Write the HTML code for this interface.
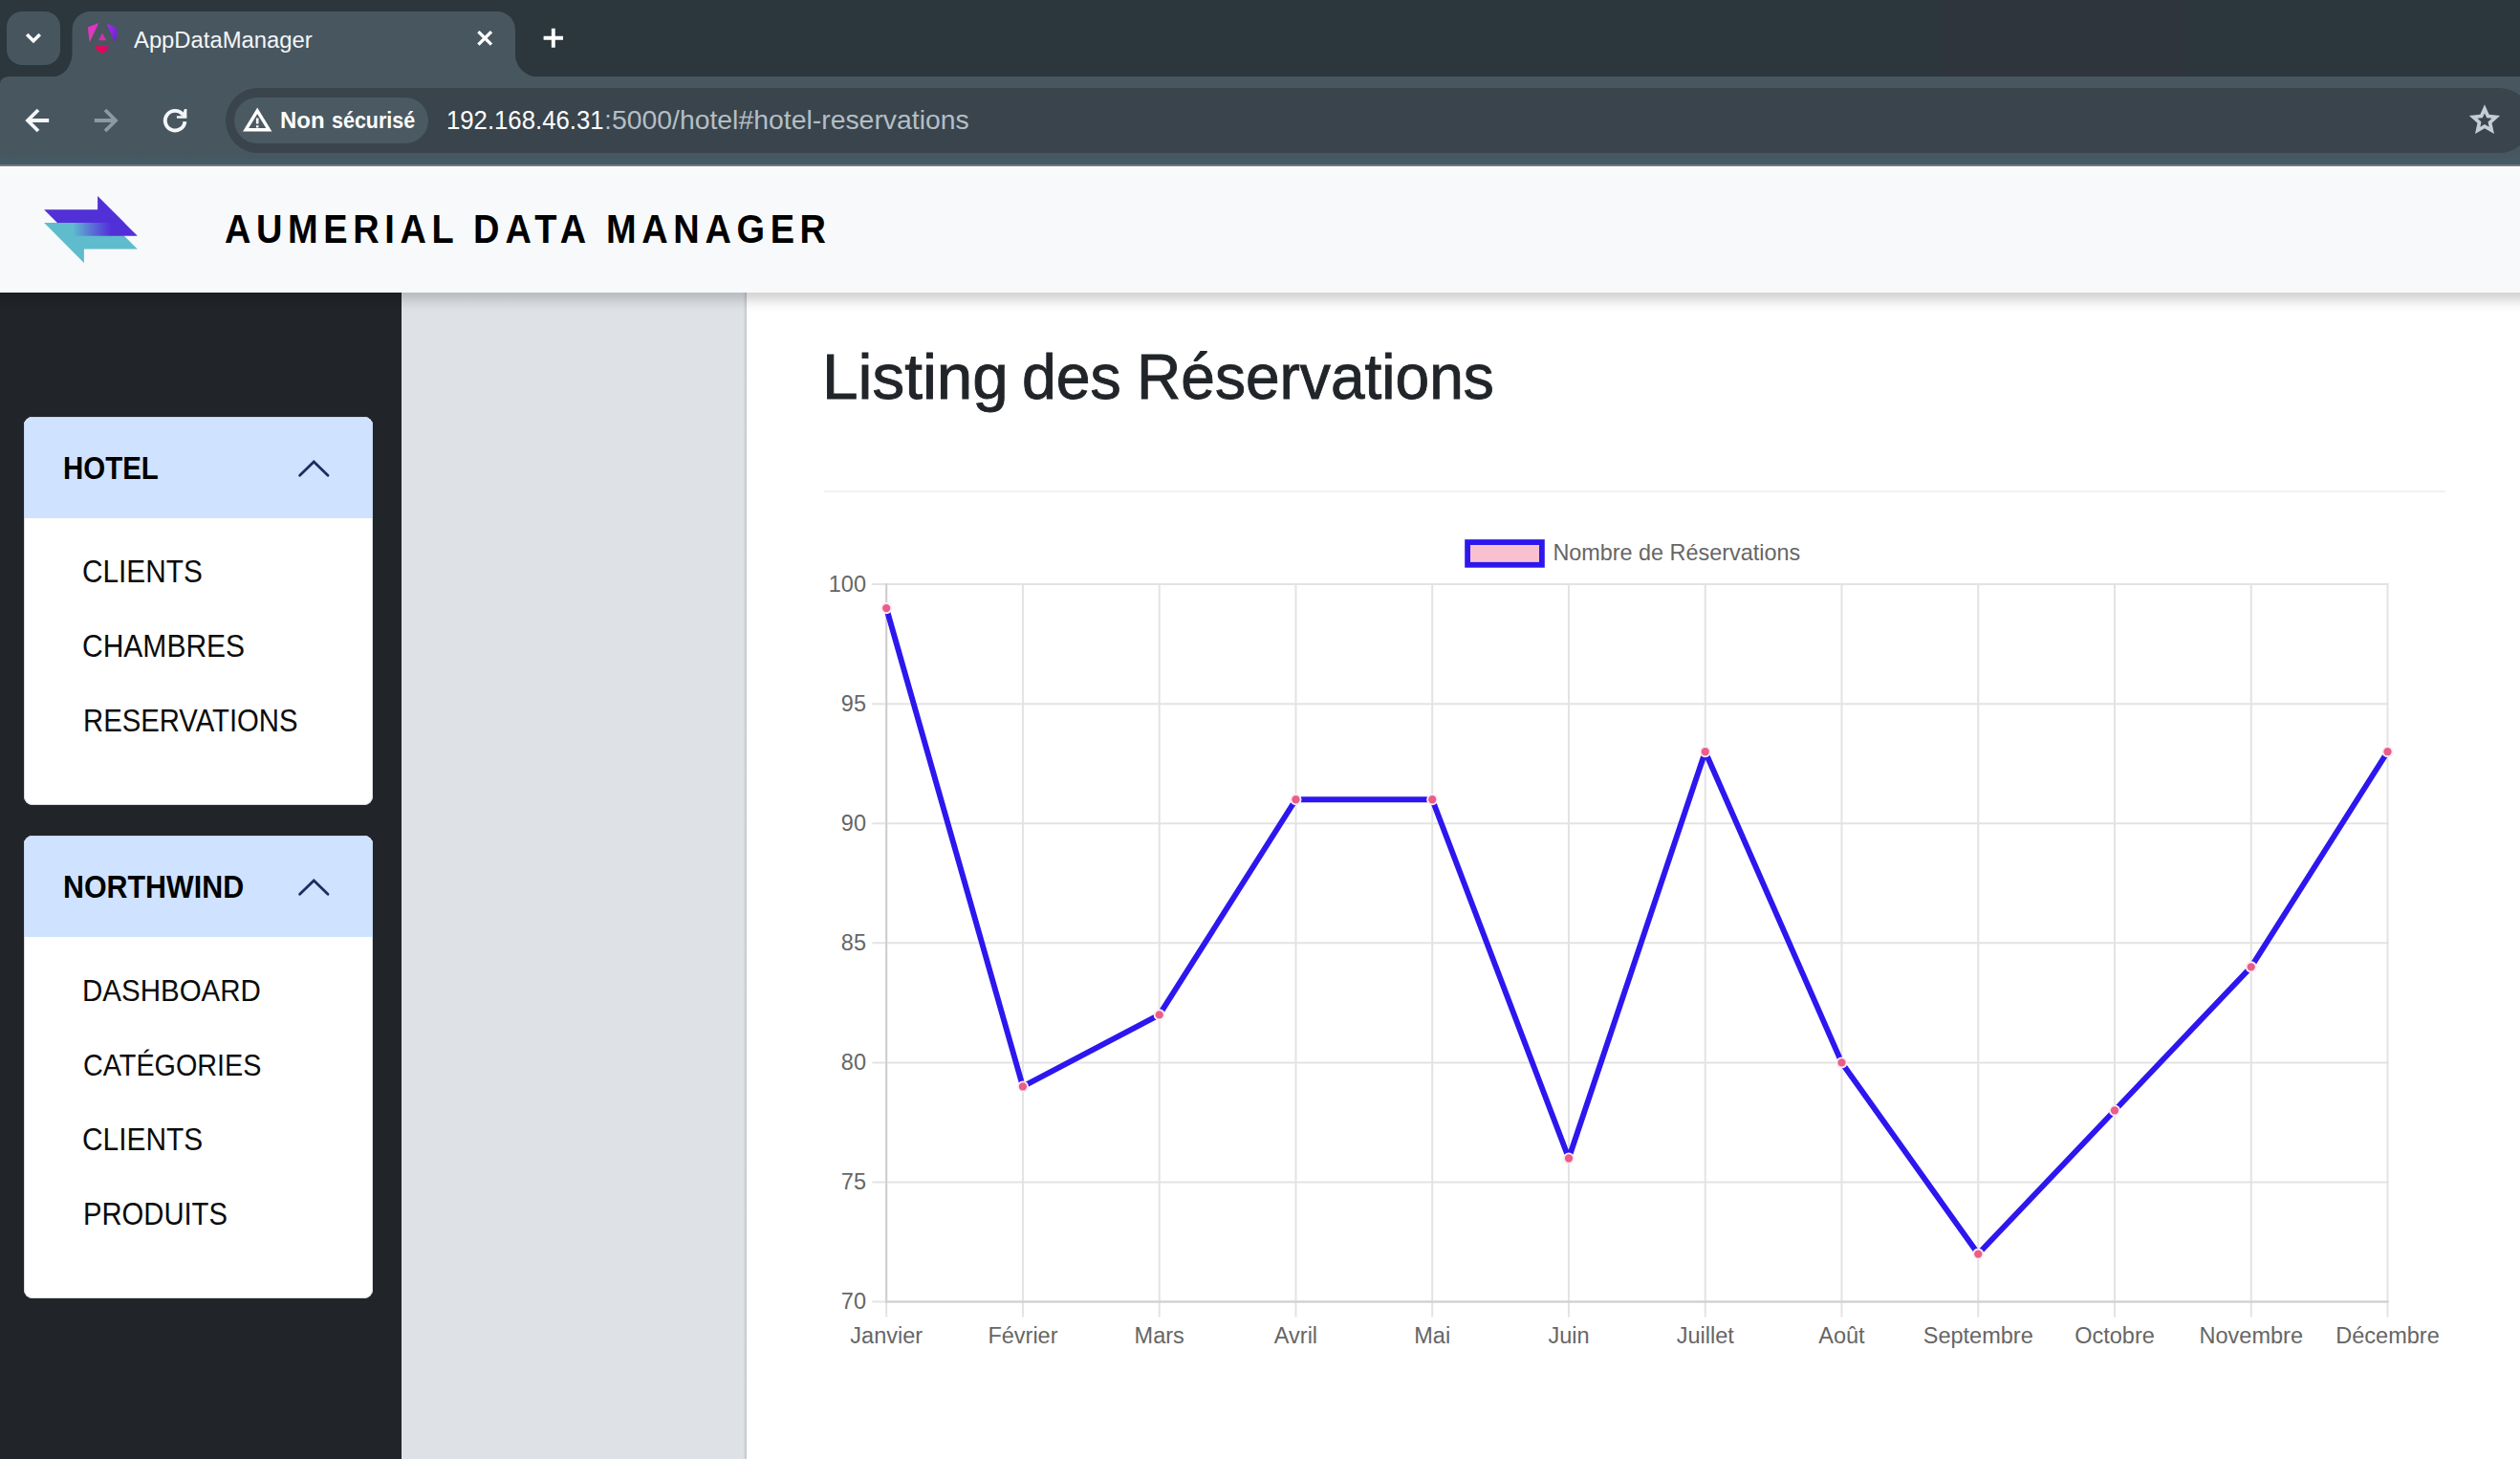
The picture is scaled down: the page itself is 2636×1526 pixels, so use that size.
<!DOCTYPE html>
<html lang="fr"><head><meta charset="utf-8"><title>AppDataManager</title>
<style>
html,body{margin:0;padding:0;overflow:hidden}
body{width:2636px;height:1526px;position:relative;overflow:hidden;background:#fff;font-family:"Liberation Sans",sans-serif}
.a{position:absolute}
.t{position:absolute;white-space:pre;line-height:1;transform-origin:0 0;font-family:"Liberation Sans",sans-serif}
svg{position:absolute;overflow:visible}
</style></head><body>
<div class="a" style="left:0;top:0;width:2636px;height:1526px;overflow:hidden">

<div class="a" style="left:0;top:0;width:2636px;height:100px;background:#2b373c"></div>
<div class="a" style="left:0;top:80px;width:2636px;height:93px;background:linear-gradient(to bottom,#48565f 0,#48565f 82px,#445a67 90px,#47585f 92px);border-top-left-radius:10px 7px"></div>
<div class="a" style="left:0;top:172px;width:2636px;height:1.8px;background:#737d80"></div>
<div class="a" style="left:0;top:173.8px;width:2636px;height:3px;background:#fff"></div>
<div class="a" style="left:2031px;top:0;width:255px;height:80px;background:#2e353d"></div>
<div class="a" style="left:7px;top:12px;width:56px;height:56px;border-radius:16px;background:#47555e"></div>
<svg style="left:7px;top:12px" width="56" height="56" viewBox="0 0 56 56"><path d="M21.15 23.9 L27.95 30.7 L34.75 23.9" fill="none" stroke="#fff" stroke-width="3.5"/></svg>
<svg style="left:0;top:0" width="700" height="82" viewBox="0 0 700 82"><path d="M54.5 80.5 A21 25 0 0 0 75.5 55.5 L75.5 31 A19 19 0 0 1 94.5 12 L520 12 A19 19 0 0 1 539 31 L539 57 A24 23.5 0 0 0 563 80.5 Z" fill="#48565f"/></svg>
<svg style="left:84px;top:16px" width="48" height="48" viewBox="84 16 48 48">
<defs><linearGradient id="fl" x1="0" y1="0" x2="0" y2="1"><stop offset="0" stop-color="#e22fd8"/><stop offset="1" stop-color="#e0409c"/></linearGradient>
<linearGradient id="fr" x1="0" y1="0" x2="1" y2="1"><stop offset="0" stop-color="#ac2cf0"/><stop offset="1" stop-color="#6422d0"/></linearGradient>
<linearGradient id="fb" x1="0" y1="0" x2="1" y2="0"><stop offset="0" stop-color="#e8045a"/><stop offset=".6" stop-color="#e4045c"/><stop offset="1" stop-color="#b41680"/></linearGradient></defs>
<path d="M91.9 28.6 L103.3 24 L93.6 44.4 Z" fill="url(#fl)"/>
<path d="M111.4 24.6 L121.9 29.2 L122.2 39 L120.2 44.4 Z" fill="url(#fr)"/>
<path d="M107 34.2 L111.2 42.2 L102.9 42.2 Z" fill="#cc34a8"/>
<path d="M99.8 48.3 L113.9 48.3 L113 52.3 L107 55.9 L101 52.3 Z" fill="url(#fb)"/>
</svg>
<span class="t" style="left:139.5px;top:30.48px;font-size:23.91px;font-weight:400;color:#f3f6f9;transform:scaleX(0.9957);">AppDataManager</span>
<svg style="left:0;top:0" width="700" height="80"><path d="M500.4 33.1 L514 46.7 M514 33.1 L500.4 46.7" stroke="#fff" stroke-width="3.3" fill="none"/><path d="M568.6 39.8 L589 39.8 M578.8 29.8 L578.8 49.8" stroke="#fff" stroke-width="3.9" fill="none"/></svg>
<svg style="left:0;top:80px" width="240" height="92" viewBox="0 80 240 92">
<path d="M51.2 126 L30.4 126 M40 115 L29 126 L40 137" stroke="#f4f7fa" stroke-width="3.8" fill="none" stroke-linejoin="miter"/>
<path d="M98.8 126 L119.6 126 M110 115 L121 126 L110 137" stroke="#8c9aa3" stroke-width="3.8" fill="none"/>
<path d="M191.4 120.1 A10.3 10.3 0 1 0 193.36 127.1" stroke="#f4f7fa" stroke-width="3.9" fill="none"/>
<path d="M195.4 113.9 L195.4 123.8 L184.9 123.8 L184.9 121.3 L190.6 121.3 L192.9 113.9 Z" fill="#f4f7fa"/>
</svg>
<div class="a" style="left:236px;top:92px;width:2412px;height:68px;border-radius:34px;background:#39444c"></div>
<div class="a" style="left:245px;top:101.6px;width:203.3px;height:48.2px;border-radius:24.1px;background:#4a5962"></div>
<svg style="left:250px;top:108px" width="40" height="36" viewBox="250 108 40 36">
<path d="M269.2 115.8 L281.4 135.8 L257 135.8 Z" fill="none" stroke="#fff" stroke-width="3.4" stroke-linejoin="miter"/>
<path d="M269.2 123.4 L269.2 129.4 M269.2 131.2 L269.2 133.6" stroke="#fff" stroke-width="2.6" fill="none"/></svg>
<span class="t" style="left:292.67px;top:114.72px;font-size:23.62px;font-weight:700;color:#fff;transform:scaleX(1.014);">Non</span>
<span class="t" style="left:346.59px;top:114.72px;font-size:23.62px;font-weight:700;color:#fff;transform:scaleX(0.9096);">sécurisé</span>
<span class="t" style="left:466.79px;top:113.38px;font-size:26.96px;font-weight:400;color:#fff;transform:scaleX(0.9544);">192.168.46.31</span>
<span class="t" style="left:632.39px;top:113.38px;font-size:26.96px;font-weight:400;color:#b4bec5;transform:scaleX(1.0528);">:5000/hotel#hotel-reservations</span>
<svg style="left:2570px;top:100px" width="60" height="50" viewBox="2570 100 60 50"><path d="M2599.00 109.30 L2603.67 119.87 L2615.17 121.05 L2606.56 128.76 L2608.99 140.05 L2599.00 134.25 L2589.01 140.05 L2591.44 128.76 L2582.83 121.05 L2594.33 119.87 Z M2599.00 118.40 L2601.17 123.31 L2606.51 123.86 L2602.52 127.44 L2603.64 132.69 L2599.00 130.00 L2594.36 132.69 L2595.48 127.44 L2591.49 123.86 L2596.83 123.31 Z" fill="#c4cdd5" fill-rule="evenodd"/></svg>
<div class="a" style="left:0;top:306px;width:420px;height:1220px;background:#212529"></div>
<div class="a" style="left:420px;top:306px;width:361px;height:1220px;background:linear-gradient(to right,#dee2e6 0,#dee2e6 357px,#d2d5d8 359px,#c3c6c9 361px)"></div>
<div class="a" style="left:0;top:176px;width:2636px;height:130px;background:#f8f9fa"></div>
<div class="a" style="left:0;top:306px;width:2636px;height:22px;background:linear-gradient(to bottom,rgba(0,0,0,.165) 0,rgba(0,0,0,.14) 4px,rgba(0,0,0,.08) 9px,rgba(0,0,0,.03) 14px,rgba(0,0,0,.008) 18px,rgba(0,0,0,0) 22px)"></div>
<svg style="left:30px;top:190px" width="140" height="100" viewBox="30 190 140 100">
<defs><linearGradient id="lg" gradientUnits="userSpaceOnUse" x1="76" y1="0" x2="116" y2="0"><stop offset="0" stop-color="#5fbccd"/><stop offset=".45" stop-color="#5a78d6"/><stop offset="1" stop-color="#5230d8"/></linearGradient></defs>
<path d="M46.1 233 L116.2 233 L143.8 260.6 L87.9 260.6 L87.9 275 Z" fill="#5fbccd"/>
<path d="M46.1 219.3 L102.1 219.3 L102.1 204.9 L130.7 233.6 L60.4 233.6 Z" fill="#5230d8"/>
<path d="M59.8 233 L130 233 L143.8 246.8 L73.6 246.8 Z" fill="url(#lg)"/>
</svg>
<span class="t" style="left:234.8px;top:219.16px;font-size:42.17px;font-weight:700;color:#000;letter-spacing:6.254px;transform:scaleX(0.9);">AUMERIAL</span>
<span class="t" style="left:495.3px;top:219.16px;font-size:42.17px;font-weight:700;color:#000;letter-spacing:6.778px;transform:scaleX(0.9);">DATA</span>
<span class="t" style="left:634.2px;top:219.16px;font-size:42.17px;font-weight:700;color:#000;letter-spacing:6.296px;transform:scaleX(0.9);">MANAGER</span>
<div class="a" style="left:25px;top:436px;width:365px;height:406px;border-radius:9px;background:#fff;overflow:hidden;box-shadow:inset 0 0 0 1px #d9dcdf"><div class="a" style="left:0;top:0;width:365px;height:106px;background:#cfe2ff;box-shadow:inset 0 1px 0 #c3d4ee,inset 1px 0 0 #c3d4ee,inset -1px 0 0 #c3d4ee"></div></div>
<div class="a" style="left:25px;top:874px;width:365px;height:484px;border-radius:9px;background:#fff;overflow:hidden;box-shadow:inset 0 0 0 1px #d9dcdf"><div class="a" style="left:0;top:0;width:365px;height:106px;background:#cfe2ff;box-shadow:inset 0 1px 0 #c3d4ee,inset 1px 0 0 #c3d4ee,inset -1px 0 0 #c3d4ee"></div></div>
<svg style="left:300px;top:470.2px" width="56" height="40" viewBox="300 470.2 56 40"><path d="M313.6 497.5 L328.3 483.2 L343 497.5" fill="none" stroke="#1b2e63" stroke-width="2.8" stroke-linecap="round" stroke-linejoin="miter"/></svg>
<svg style="left:300px;top:908.2px" width="56" height="40" viewBox="300 908.2 56 40"><path d="M313.6 935.5 L328.3 921.2 L343 935.5" fill="none" stroke="#1b2e63" stroke-width="2.8" stroke-linecap="round" stroke-linejoin="miter"/></svg>
<span class="t" style="left:66.2px;top:474.06px;font-size:32.75px;font-weight:700;color:#000;transform:scaleX(0.8991);">HOTEL</span>
<span class="t" style="left:66.34px;top:912.16px;font-size:32.75px;font-weight:700;color:#000;transform:scaleX(0.928);">NORTHWIND</span>
<span class="t" style="left:86.46px;top:582.21px;font-size:32.46px;font-weight:400;color:#0b0b0b;transform:scaleX(0.9179);">CLIENTS</span>
<span class="t" style="left:86.45px;top:660.11px;font-size:32.46px;font-weight:400;color:#0b0b0b;transform:scaleX(0.9249);">CHAMBRES</span>
<span class="t" style="left:86.59px;top:738.01px;font-size:32.46px;font-weight:400;color:#0b0b0b;transform:scaleX(0.902);">RESERVATIONS</span>
<span class="t" style="left:86.05px;top:1020.46px;font-size:32.17px;font-weight:400;color:#0b0b0b;transform:scaleX(0.9176);">DASHBOARD</span>
<span class="t" style="left:87.01px;top:1098.26px;font-size:32.17px;font-weight:400;color:#0b0b0b;transform:scaleX(0.8946);">CATÉGORIES</span>
<span class="t" style="left:86.45px;top:1176.23px;font-size:32.32px;font-weight:400;color:#0b0b0b;transform:scaleX(0.9248);">CLIENTS</span>
<span class="t" style="left:86.6px;top:1254.21px;font-size:32.46px;font-weight:400;color:#0b0b0b;transform:scaleX(0.9);">PRODUITS</span>
<span class="t" style="left:859.89px;top:361.85px;font-size:65.94px;font-weight:400;color:#212529;transform:scaleX(1.0221);-webkit-text-stroke:0.9px #212529;">Listing</span>
<span class="t" style="left:1069.17px;top:361.85px;font-size:65.94px;font-weight:400;color:#212529;transform:scaleX(0.9762);-webkit-text-stroke:0.9px #212529;">des</span>
<span class="t" style="left:1188.94px;top:361.85px;font-size:65.94px;font-weight:400;color:#212529;transform:scaleX(0.9714);-webkit-text-stroke:0.9px #212529;">Réservations</span>
<div class="a" style="left:862px;top:513px;width:1696px;height:2px;background:#f1f1f2"></div>
<svg style="left:0;top:0" width="2636" height="1526" viewBox="0 0 2636 1526" font-family="Liberation Sans, sans-serif" font-size="23.5" fill="#666">
<path d="M927.20 610.1 L927.20 1377.5" stroke="#e3e3e3" stroke-width="2" fill="none"/>
<path d="M1069.95 610.1 L1069.95 1377.5" stroke="#e3e3e3" stroke-width="2" fill="none"/>
<path d="M1212.71 610.1 L1212.71 1377.5" stroke="#e3e3e3" stroke-width="2" fill="none"/>
<path d="M1355.46 610.1 L1355.46 1377.5" stroke="#e3e3e3" stroke-width="2" fill="none"/>
<path d="M1498.22 610.1 L1498.22 1377.5" stroke="#e3e3e3" stroke-width="2" fill="none"/>
<path d="M1640.97 610.1 L1640.97 1377.5" stroke="#e3e3e3" stroke-width="2" fill="none"/>
<path d="M1783.73 610.1 L1783.73 1377.5" stroke="#e3e3e3" stroke-width="2" fill="none"/>
<path d="M1926.48 610.1 L1926.48 1377.5" stroke="#e3e3e3" stroke-width="2" fill="none"/>
<path d="M2069.24 610.1 L2069.24 1377.5" stroke="#e3e3e3" stroke-width="2" fill="none"/>
<path d="M2211.99 610.1 L2211.99 1377.5" stroke="#e3e3e3" stroke-width="2" fill="none"/>
<path d="M2354.75 610.1 L2354.75 1377.5" stroke="#e3e3e3" stroke-width="2" fill="none"/>
<path d="M2497.50 610.1 L2497.50 1377.5" stroke="#e3e3e3" stroke-width="2" fill="none"/>
<path d="M912.4 1361.60 L2498.5 1361.60" stroke="#e3e3e3" stroke-width="2" fill="none"/>
<path d="M912.4 1236.52 L2498.5 1236.52" stroke="#e3e3e3" stroke-width="2" fill="none"/>
<path d="M912.4 1111.43 L2498.5 1111.43" stroke="#e3e3e3" stroke-width="2" fill="none"/>
<path d="M912.4 986.35 L2498.5 986.35" stroke="#e3e3e3" stroke-width="2" fill="none"/>
<path d="M912.4 861.27 L2498.5 861.27" stroke="#e3e3e3" stroke-width="2" fill="none"/>
<path d="M912.4 736.18 L2498.5 736.18" stroke="#e3e3e3" stroke-width="2" fill="none"/>
<path d="M912.4 611.10 L2498.5 611.10" stroke="#e3e3e3" stroke-width="2" fill="none"/>
<path d="M927.20 610.1 L927.20 1362.6" stroke="#cfcfcf" stroke-width="2" fill="none"/>
<path d="M926.20 1361.6 L2498.5 1361.6" stroke="#cfcfcf" stroke-width="2" fill="none"/>
<path d="M927.20 636.12 L1069.95 1136.45 L1212.71 1061.40 L1355.46 836.25 L1498.22 836.25 L1640.97 1211.50 L1783.73 786.22 L1926.48 1111.43 L2069.24 1311.57 L2211.99 1161.47 L2354.75 1011.37 L2497.50 786.22" stroke="#2d17ee" stroke-width="5.9" fill="none" stroke-linejoin="round"/>
<circle cx="927.20" cy="636.12" r="5.1" fill="#ea5d89" stroke="#fcecf1" stroke-width="1.9"/>
<circle cx="1069.95" cy="1136.45" r="5.1" fill="#ea5d89" stroke="#fcecf1" stroke-width="1.9"/>
<circle cx="1212.71" cy="1061.40" r="5.1" fill="#ea5d89" stroke="#fcecf1" stroke-width="1.9"/>
<circle cx="1355.46" cy="836.25" r="5.1" fill="#ea5d89" stroke="#fcecf1" stroke-width="1.9"/>
<circle cx="1498.22" cy="836.25" r="5.1" fill="#ea5d89" stroke="#fcecf1" stroke-width="1.9"/>
<circle cx="1640.97" cy="1211.50" r="5.1" fill="#ea5d89" stroke="#fcecf1" stroke-width="1.9"/>
<circle cx="1783.73" cy="786.22" r="5.1" fill="#ea5d89" stroke="#fcecf1" stroke-width="1.9"/>
<circle cx="1926.48" cy="1111.43" r="5.1" fill="#ea5d89" stroke="#fcecf1" stroke-width="1.9"/>
<circle cx="2069.24" cy="1311.57" r="5.1" fill="#ea5d89" stroke="#fcecf1" stroke-width="1.9"/>
<circle cx="2211.99" cy="1161.47" r="5.1" fill="#ea5d89" stroke="#fcecf1" stroke-width="1.9"/>
<circle cx="2354.75" cy="1011.37" r="5.1" fill="#ea5d89" stroke="#fcecf1" stroke-width="1.9"/>
<circle cx="2497.50" cy="786.22" r="5.1" fill="#ea5d89" stroke="#fcecf1" stroke-width="1.9"/>
<text x="906.0" y="1369.40" text-anchor="end">70</text>
<text x="906.0" y="1244.32" text-anchor="end">75</text>
<text x="906.0" y="1119.23" text-anchor="end">80</text>
<text x="906.0" y="994.15" text-anchor="end">85</text>
<text x="906.0" y="869.07" text-anchor="end">90</text>
<text x="906.0" y="743.98" text-anchor="end">95</text>
<text x="906.0" y="618.90" text-anchor="end">100</text>
<text x="927.20" y="1404.8" text-anchor="middle">Janvier</text>
<text x="1069.95" y="1404.8" text-anchor="middle">Février</text>
<text x="1212.71" y="1404.8" text-anchor="middle">Mars</text>
<text x="1355.46" y="1404.8" text-anchor="middle">Avril</text>
<text x="1498.22" y="1404.8" text-anchor="middle">Mai</text>
<text x="1640.97" y="1404.8" text-anchor="middle">Juin</text>
<text x="1783.73" y="1404.8" text-anchor="middle">Juillet</text>
<text x="1926.48" y="1404.8" text-anchor="middle">Août</text>
<text x="2069.24" y="1404.8" text-anchor="middle">Septembre</text>
<text x="2211.99" y="1404.8" text-anchor="middle">Octobre</text>
<text x="2354.75" y="1404.8" text-anchor="middle">Novembre</text>
<text x="2497.50" y="1404.8" text-anchor="middle">Décembre</text>
<rect x="1535.1" y="567.1" width="77.8" height="23.7" fill="#f9c0d0" stroke="#2d17ee" stroke-width="5.8"/>
<text x="1624.4" y="585.6" font-size="23.4">Nombre de Réservations</text>
</svg>
</div>
</body></html>
